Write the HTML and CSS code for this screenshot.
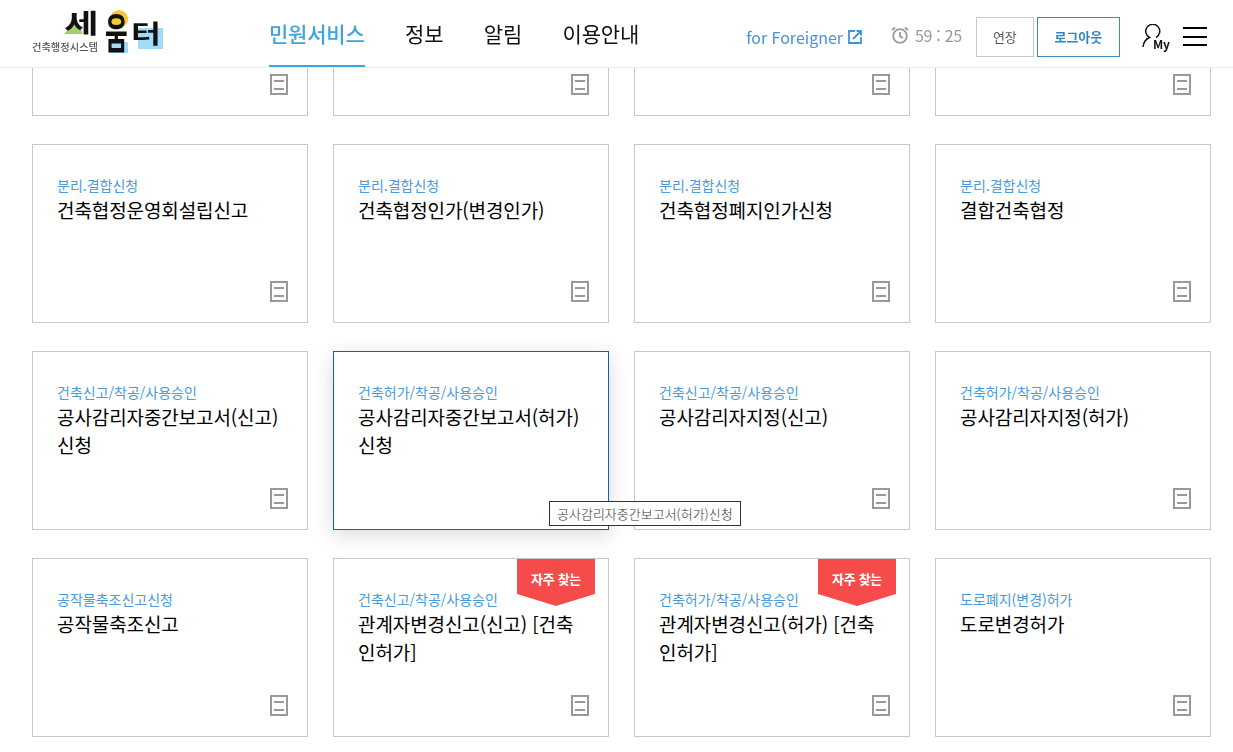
FILE: index.html
```html
<!DOCTYPE html>
<html lang="ko">

<head>
	<meta charset="UTF-8">
	<title>세움터</title>
	<link rel="stylesheet" href="styles.css">
</head>

<body>
	<header class="top">
		<a class="logo">
			<svg width="134" height="44" viewBox="0 0 134 44">
				<polygon points="33,24 45,10 52,24" fill="#a5cf6a" />
				<circle cx="88" cy="9" r="9" fill="#f9c62f" />
				<rect x="79" y="32" width="18" height="11" fill="#9edcf7" />
				<rect x="107" y="18" width="25" height="21" fill="#9edcf7" />
				<text class="logo__name" transform="translate(33 23) scale(1.45 1)">세</text>
				<text class="logo__name" transform="translate(74 39) scale(0.95 1.6)">움</text>
				<text class="logo__name" transform="translate(100 33) scale(1.25 0.95)">터</text>
				<text class="logo__sub" x="1" y="41" textLength="66" lengthAdjust="spacingAndGlyphs">건축행정시스템</text>
			</svg>
		</a>
		<nav class="gnb">
			<a class="gnb__item is-active">민원서비스</a>
			<a class="gnb__item">정보</a>
			<a class="gnb__item">알림</a>
			<a class="gnb__item">이용안내</a>
		</nav>
		<div class="util">
			<a class="foreigner">for Foreigner
				<svg width="14" height="14" viewBox="0 0 14 14" fill="none" stroke="#3f93d8" stroke-width="1.800">
					<path d="M7 1H1v12h12V7" />
					<path d="M5 9l8-8M8.500 1H13v4.500" />
				</svg>
			</a>
			<span class="timer">
				<svg width="18" height="18" viewBox="0 0 18 18" fill="none" stroke="#999" stroke-width="1.800">
					<circle cx="9" cy="10" r="6.800" />
					<path d="M9 6v4.400l3 1.600M1 4l3-2.500M17 4l-3-2.500" />
				</svg>
				59 : 25
			</span>
			<button class="btn">연장</button>
			<button class="btn btn--line">로그아웃</button>
			<a class="my">
				<svg width="19" height="26" viewBox="0 0 19 26" fill="none" stroke="#111" stroke-width="1.500">
					<path d="M14 13.500A7 7 0 1 0 7.500 13.500C4 15 1.500 18.500 1 23" />
				</svg>
				<span class="my__txt">My</span>
			</a>
			<a class="menu"><i></i><i></i><i></i></a>
		</div>
	</header>

	<main class="list">
		<a class="card card--cut"><span class="doc"></span></a>
		<a class="card card--cut"><span class="doc"></span></a>
		<a class="card card--cut"><span class="doc"></span></a>
		<a class="card card--cut"><span class="doc"></span></a>

		<a class="card">
			<span class="card__cate">분리.결합신청</span>
			<strong class="card__name">건축협정운영회설립신고</strong>
			<span class="doc"></span>
		</a>
		<a class="card">
			<span class="card__cate">분리.결합신청</span>
			<strong class="card__name">건축협정인가(변경인가)</strong>
			<span class="doc"></span>
		</a>
		<a class="card">
			<span class="card__cate">분리.결합신청</span>
			<strong class="card__name">건축협정폐지인가신청</strong>
			<span class="doc"></span>
		</a>
		<a class="card">
			<span class="card__cate">분리.결합신청</span>
			<strong class="card__name">결합건축협정</strong>
			<span class="doc"></span>
		</a>

		<a class="card">
			<span class="card__cate">건축신고/착공/사용승인</span>
			<strong class="card__name">공사감리자중간보고서(신고) 신청</strong>
			<span class="doc"></span>
		</a>
		<a class="card is-hover">
			<span class="card__cate">건축허가/착공/사용승인</span>
			<strong class="card__name">공사감리자중간보고서(허가) 신청</strong>
			<span class="tip">공사감리자중간보고서(허가)신청</span>
		</a>
		<a class="card">
			<span class="card__cate">건축신고/착공/사용승인</span>
			<strong class="card__name">공사감리자지정(신고)</strong>
			<span class="doc"></span>
		</a>
		<a class="card">
			<span class="card__cate">건축허가/착공/사용승인</span>
			<strong class="card__name">공사감리자지정(허가)</strong>
			<span class="doc"></span>
		</a>

		<a class="card">
			<span class="card__cate">공작물축조신고신청</span>
			<strong class="card__name">공작물축조신고</strong>
			<span class="doc"></span>
		</a>
		<a class="card">
			<span class="badge">자주 찾는</span>
			<span class="card__cate">건축신고/착공/사용승인</span>
			<strong class="card__name">관계자변경신고(신고) [건축인허가]</strong>
			<span class="doc"></span>
		</a>
		<a class="card">
			<span class="badge">자주 찾는</span>
			<span class="card__cate">건축허가/착공/사용승인</span>
			<strong class="card__name">관계자변경신고(허가) [건축인허가]</strong>
			<span class="doc"></span>
		</a>
		<a class="card">
			<span class="card__cate">도로폐지(변경)허가</span>
			<strong class="card__name">도로변경허가</strong>
			<span class="doc"></span>
		</a>
	</main>
</body>

</html>
```

FILE: styles.css
```css
* {
	box-sizing: border-box;
}

html,
body {
	height: 752px;
	overflow: hidden;
}

body {
	margin: 0;
	background-color: #fff;
	color: #000;
	font-family: "Noto Sans CJK KR", "Noto Sans", sans-serif;
}

.top {
	position: fixed;
	top: 0;
	left: 0;
	right: 0;
	z-index: 10;
	display: flex;
	align-items: center;
	height: 68px;
	padding-left: 31px;
	background-color: #fff;
	border-bottom: 1px solid #eee;
}

.logo {
	display: block;
	align-self: flex-start;
	width: 134px;
	height: 44px;
	margin-top: 10px;
}

.logo svg {
	display: block;
	overflow: visible;
}

.logo__name {
	font-size: 26px;
	font-weight: 700;
	fill: #111;
}

.logo__sub {
	font-size: 10px;
	font-weight: 500;
	fill: #555;
}

.gnb {
	display: flex;
	gap: 40.500px;
	margin-left: 104px;
	height: 67px;
}

.gnb__item {
	font-size: 21px;
	line-height: 67px;
	font-weight: 400;
	letter-spacing: -0.2px;
	color: #111;
}

.gnb__item.is-active {
	color: #3fa3de;
	font-weight: 500;
	border-bottom: 2px solid #3fa3de;
}

.util {
	display: flex;
	align-items: center;
	margin-left: auto;
	margin-top: 6px;
	padding-right: 26px;
}

.foreigner {
	display: flex;
	align-items: center;
	gap: 5px;
	font-size: 16px;
	color: #4a90d9;
}

.timer {
	display: flex;
	align-items: center;
	gap: 6px;
	margin-left: 29px;
	margin-bottom: 4px;
	font-size: 16px;
	letter-spacing: -0.3px;
	color: #999;
}

.btn {
	height: 40px;
	margin-left: 14px;
	padding: 0;
	width: 58px;
	background-color: #fff;
	border: 1px solid #c8c8c8;
	font-family: inherit;
	font-size: 13px;
	color: #555;
}

.btn--line {
	width: 83px;
	margin-left: 3px;
	border-color: #3b8ac4;
	color: #2f86c4;
	font-weight: 700;
}

.my {
	display: flex;
	align-items: flex-end;
	height: 26px;
	margin-left: 22px;
}

.my svg {
	display: block;
	flex: none;
}

.my__txt {
	margin-left: -8px;
	margin-bottom: -1px;
	font-size: 12px;
	line-height: 14px;
	font-weight: 700;
	color: #111;
}

.menu {
	display: flex;
	flex-direction: column;
	gap: 6.500px;
	width: 24px;
	margin-left: 13px;
}

.menu i {
	display: block;
	height: 2px;
	background-color: #000;
}

.list {
	display: grid;
	grid-template-columns: repeat(4, 276px);
	grid-auto-rows: 179px;
	column-gap: 25px;
	row-gap: 28px;
	margin-top: -63px;
	padding-left: 32px;
}

.card {
	position: relative;
	display: flex;
	flex-direction: column;
	padding: 29px 24px 20px;
	background-color: #fff;
	border: 1px solid #c8c8c8;
}

.card.is-hover {
	border-color: #0a5fc0;
	box-shadow: 0 5px 20px rgba(0, 0, 0, 0.15);
}

.card__cate {
	font-size: 14px;
	line-height: 22px;
	color: #4a9bdc;
}

.card__name {
	font-size: 19px;
	line-height: 28px;
	font-weight: 400;
	letter-spacing: -0.1px;
	color: #000;
	word-break: break-all;
}

.doc {
	position: relative;
	display: block;
	flex: none;
	align-self: flex-end;
	width: 18px;
	height: 21px;
	margin-top: auto;
	margin-right: -5px;
	border: 2px solid #999;
}

.doc::before {
	content: "";
	position: absolute;
	left: 2px;
	right: 2px;
	top: 4px;
	height: 6px;
	border-top: 2px solid #999;
	border-bottom: 2px solid #999;
}

.badge {
	position: absolute;
	top: 0;
	right: 13px;
	width: 78px;
	height: 47px;
	padding-top: 10px;
	background-color: #f64b4b;
	clip-path: polygon(0 0, 100% 0, 100% 35px, 50% 100%, 0 35px);
	color: #fff;
	font-size: 13px;
	line-height: 20px;
	font-weight: 700;
	letter-spacing: -0.3px;
	text-align: center;
}

.tip {
	position: absolute;
	left: 215px;
	top: 149px;
	z-index: 5;
	height: 25px;
	padding: 0 7px;
	background-color: #fff;
	border: 1px solid #333;
	font-size: 13px;
	line-height: 23px;
	font-weight: 300;
	color: #333;
	white-space: nowrap;
}
```
